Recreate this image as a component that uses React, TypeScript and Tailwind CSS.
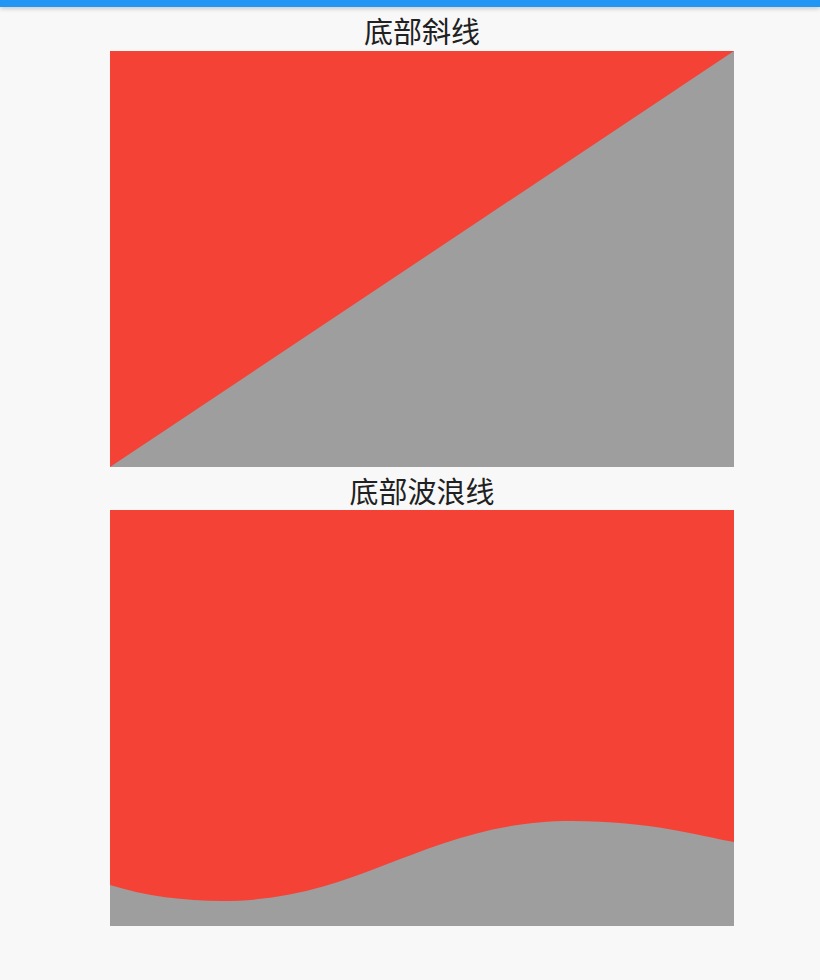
import React from "react";

export default function App() {
  return (
    <div className="min-h-[980px] w-[820px] bg-[#f8f8f8]" style={{ fontFamily: '"Noto Sans CJK SC", "Noto Sans", sans-serif' }}>
      <div className="h-[7px] bg-[#2196f3] shadow-[0_2px_4px_rgba(0,0,0,0.18)]" />
      <div className="ml-[110px] flex w-[624px] flex-col">
        <div className="flex h-[44px] items-center justify-center pt-[2px] text-[29px] leading-none text-[#212121]">底部斜线</div>
        <div className="relative h-[416px] w-[624px] bg-[#9e9e9e]">
          <svg className="block h-full w-full" viewBox="0 0 624 416" preserveAspectRatio="none">
            <path d="M0 0 L624 0 L0 416 Z" fill="#f44336" />
          </svg>
        </div>
        <div className="flex h-[43px] items-center justify-center pt-[3px] text-[29px] leading-none text-[#212121]">底部波浪线</div>
        <div className="h-[416px] w-[624px] bg-[#9e9e9e]">
          <svg className="block h-full w-full" viewBox="0 0 624 416" preserveAspectRatio="none">
            <path d="M0 0 L0 375 C35 386 75 391 112 391 C252 391 317 311 462 311 C540 311 590 326 624 332 L624 0 Z" fill="#f44336" />
          </svg>
        </div>
      </div>
    </div>
  );
}
